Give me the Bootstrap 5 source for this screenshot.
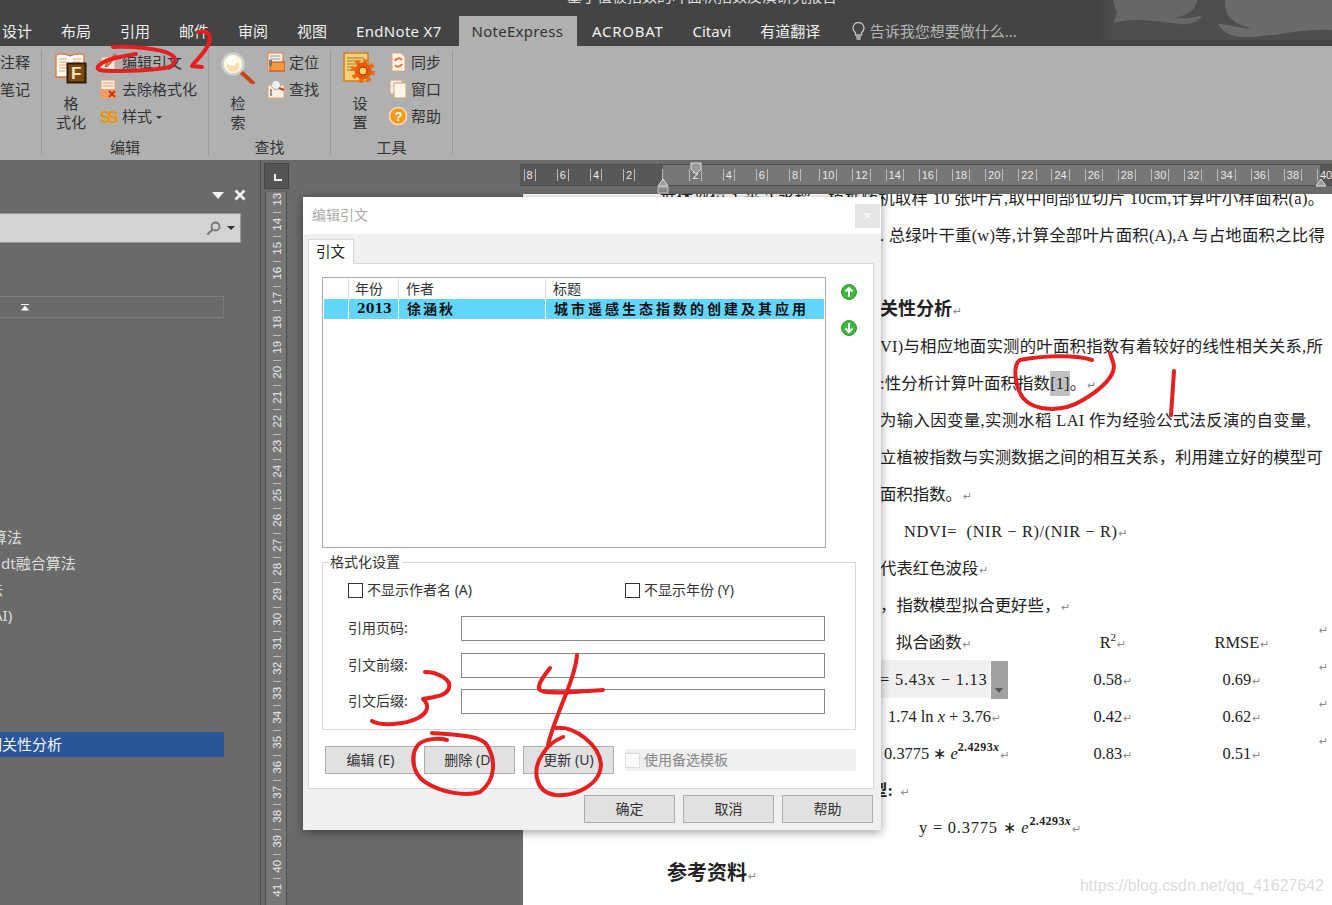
<!DOCTYPE html>
<html lang="zh-CN">
<head>
  <meta charset="UTF-8">
  <title>编辑引文</title>
  <link href="https://cdn.jsdelivr.net/npm/bootstrap@5.3.0/dist/css/bootstrap.min.css" rel="stylesheet">
  <style>
    html, body { width: 1332px; height: 905px; overflow: hidden; }
    body { position: relative; background: #6a6a6a; font: 15px/1.2 "Noto Sans", "Noto Sans CJK SC", sans-serif; color: #333; }
    .topbar { height: 46px; background: #444; position: relative; overflow: hidden; }
    .doc-title { position: absolute; left: 567px; top: -13px; font-size: 15px; color: #ddd; white-space: nowrap; }
    .leaf-art { position: absolute; left: 1100px; top: 0; }
    .rtabs { position: absolute; left: -12.5px; top: 16px; height: 30px; flex-wrap: nowrap; }
    .rtab { padding: 0 14.5px; line-height: 30px; color: #f0f0f0; white-space: nowrap; }
    .rtab.lat1 { letter-spacing: .3px; padding-right: 17px; }
    .rtab.on { background: #b0b0b0; color: #333; padding: 0 14px 0 13px; letter-spacing: .27px; }
    .rtab.lat2 { letter-spacing: .7px; padding-left: 15px; }
    .rtab.hint { color: #b5b5b5; padding-left: 16px; }
    .ribbon { height: 114px; background: #b0b0b0; }
    .rgroup { margin-top: 4px; height: 105px; border-right: 1px solid #999; padding-left: 8px; position: relative; }
    .g0 { width: 42px; padding-left: 0; }
    .g1 { width: 167px; }
    .g2, .g3 { width: 122px; }
    .rlabel { position: absolute; left: 0; right: 0; bottom: -1px; text-align: center; line-height: 18px; }
    .bigbtn { width: 42px; text-align: center; line-height: 19px; padding-top: 2px; margin-right: 8px; }
    .bigbtn svg { display: block; margin: 0 auto 10px; }
    .smallcol { margin-top: -1.5px; }
    .smallrow { height: 27px; gap: 4px; white-space: nowrap; }
    .smallrow svg { width: 18px; height: 20px; flex: none; }
    .caret-mini { display: inline-block; border: 3px solid transparent; border-top: 3px solid #333; border-bottom: 0; margin-left: 4px; vertical-align: middle; }
    .work { height: 745px; }
    .navpane { width: 261px; border-right: 1px solid #4e4e4e; position: relative; color: #ddd; }
    .pane-head { height: 53px; padding: 17px 14px 0 0; gap: 10px; }
    .tri-w { border: 6px solid transparent; border-top: 7px solid #f2f2f2; border-bottom: 0; }
    .search-fake { width: 241px; height: 30px; background: #d3d3d3; border: 1px solid #999; border-left: 0; padding-right: 5px; gap: 6px; }
    .tri-d { border: 4px solid transparent; border-top: 4px solid #333; border-bottom: 0; }
    .collapse-bar { width: 224px; height: 22px; margin-top: 53px; border: 1px solid #7c7c7c; border-left: 0; padding-left: 21px; }
    .headings { margin-top: 206px; width: 224px; font-size: 15px; }
    .headings .list-group-item { background: transparent; border: 0; border-radius: 0; color: #ddd; padding: 0; height: 26px; line-height: 26px; white-space: nowrap; overflow: hidden; }
    .headings .gap-item { height: 104px; }
    .headings .list-group-item.sel { background: #2b579a; color: #f4f4f4; height: 25px; line-height: 25px; text-indent: -13px; }
    .cut-a { text-indent: -8px; }
    .cut-b { text-indent: -12px; }
    .cut-c { text-indent: -7px; }
    .headings .list-group-item.hd-dt { padding-left: 1px; }
    .vrulercol { width: 27px; position: relative; }
    .lbox { width: 25px; height: 26px; margin: 3px 0 0 3px; background: #555; border: 1px solid #454545; position: relative; }
    .lmark { position: absolute; left: 9px; top: 10px; width: 8px; height: 7px; border-left: 2px solid #eee; border-bottom: 2px solid #eee; }
    .vruler { width: 22px; margin: 3px 0 0 4px; height: 713px; background: #777; border: solid #4e4e4e; border-width: 0 1px; overflow: hidden; }
    .vruler-in { margin-top: -5px; }
    .vtick { height: 24.7px; position: relative; color: #e8e8e8; font: 11.5px/20px "Liberation Sans", sans-serif; }
    .vtick span { display: block; text-align: center; transform: rotate(-90deg) translateY(1.5px); line-height: 24.7px; }
    .vtick::after { content: ""; position: absolute; left: 7px; top: 0; height: 1px; width: 8px; background: #bbb; }
    .deskarea { position: relative; overflow: hidden; }
    .hruler { height: 22px; margin: 4px 0 0 232px; width: 812px; overflow: hidden; background: linear-gradient(90deg, #585858 143px, #777 143px, #777 800px, #585858 800px); border-top: 1px solid #4e4e4e; border-bottom: 1px solid #4e4e4e; color: #e8e8e8; font: 11px/20px "Liberation Sans", sans-serif; }
    .htick { width: 33.2px; flex: none; text-align: center; position: relative; }
    .htick b { font-weight: 400; border-left: 1px solid #bbb; border-right: 1px solid #bbb; padding: 0 2px; }
    .htick.zero b { border-right: 0; padding: 0; }
    .hruler-in { margin-left: -7px; }
    .markers { position: absolute; left: 0; top: 0; }
    .pagesheet { position: absolute; left: 235px; top: 34px; right: 0; bottom: 0; background: #fff; overflow: hidden; color: #222; font: 16.4px/37px "Liberation Serif", "Noto Sans CJK SC", serif; white-space: nowrap; }
    .pagesheet-in { margin-top: -14.5px; }
    .dline { height: 37px; padding-left: 357px; }
    .dline.wide { padding-left: 137px; letter-spacing: .3px; }
    .sp-a { letter-spacing: .22px; }
    .sp-b { letter-spacing: .15px; }
    .sp-c { letter-spacing: .35px; }
    .ndvi { margin-left: 24px; letter-spacing: .6px; }
    .ret { color: #8c8c8c; font: 11px "DejaVu Sans", sans-serif; margin-left: 1px; letter-spacing: 0; }
    .hlref { background: #c0c0c0; padding: 3px 0; }
    .formula-box { background: #f0f0f0; width: 110px; height: 38px; line-height: 39px; margin-top: -.5px; letter-spacing: .8px; }
    .formula-drop { background: #a0a0a0; width: 17px; height: 38px; margin-left: 1px; position: relative; flex: none; }
    .formula-drop::after { content: ""; position: absolute; left: 4px; bottom: 6px; border: 4px solid transparent; border-top: 5px solid #555; border-bottom: 0; }
    .tc1 { width: 200px; flex: none; }
    .tc2 { width: 66px; text-align: center; flex: none; }
    .tc3 { width: 124px; margin-left: 34px; text-align: center; flex: none; }
    .tc4 { margin-left: 15px; }
    .dline sup { font-size: 11px; top: -.6em; }
    .dline sup.expo { font-size: 12px; font-weight: 700; letter-spacing: .4px; }
    .ital { font-style: italic; }
    .bheading { font-weight: 700; font-size: 18px; }
    .cut-line { margin-left: -9px; }
    .eq-line { margin-left: 39px; letter-spacing: .8px; }
    .refhead { font-weight: 700; font-size: 20px; margin-top: 9px; padding-left: 144px; }
    .wmark { position: absolute; left: 1080px; top: 877px; font: 15.9px "Liberation Sans", sans-serif; color: #dcdcdc; }
    .dlg { position: absolute; left: 303px; top: 197px; width: 578px; height: 633px; background: #f0f0f0; box-shadow: 0 2px 9px rgba(0,0,0,.4); font-size: 14px; color: #333; }
    .dlg-title { height: 37px; background: #fff; padding: 0 1px 0 9px; color: #aaa; }
    .dlg-x { width: 25px; height: 24px; padding: 0; border: 0; border-radius: 0; background: #e5e5e5; color: #fff; font-size: 14px; line-height: 22px; }
    .dlg-body { padding: 5px 7px 0 5px; }
    .dlg-tabs { border-bottom: 0; height: 24px; }
    .dlg-tab { width: 46px; height: 25px; line-height: 23px; padding-left: 7px; background: #fff; border: 1px solid #d9d9d9; border-bottom: 0; position: relative; z-index: 1; font-size: 14.5px; color: #222; }
    .dlg-panel { height: 526px; background: #fff; border: 1px solid #d9d9d9; padding: 13px 13px 0; }
    .reflist { width: 504px; height: 271px; border: 1px solid #aaa; padding: 1px; flex: none; }
    .rl-row { height: 20px; line-height: 20px; }
    .rl-c0 { width: 24px; flex: none; }
    .rl-c1 { width: 50px; flex: none; border-left: 1px solid #ddd; padding-left: 6px; }
    .rl-c2 { width: 147px; flex: none; border-left: 1px solid #ddd; padding-left: 7px; }
    .rl-c3 { flex: 1; border-left: 1px solid #ddd; padding-left: 7px; }
    .rl-row.picked { background: #62d6ff; font-weight: 700; color: #111; font-size: 14px; letter-spacing: 2px; }
    .rl-row.picked > div { border-left: 1px solid #fff; }
    .rl-row.picked .rl-c0 { border-left: 0; }
    .rl-row.picked .rl-c1 { font-family: "DejaVu Serif", serif; font-size: 12.5px; letter-spacing: 0; padding-left: 8px; }
    .rl-row.picked .rl-c2 { letter-spacing: 2px; padding-left: 8px; }
    .rl-row.picked .rl-c3 { letter-spacing: 3px; padding-left: 8px; }
    .updown { margin-left: 15px; padding-top: 7px; gap: 20px; }
    .fmtset { width: 534px; height: 175px; margin: 7px 0 0; border: 1px solid #d9d9d9; padding: 13px 25px 0; min-inline-size: 0; }
    .fmtset legend { float: none; width: auto; font-size: 14px; line-height: 14px; margin: 0 0 0 -19px; padding: 0 2px 0 1px; color: #333; }
    .chk-row { height: 16px; }
    .chk-col { width: 277px; gap: 4px; }
    .chk-box { width: 15px; height: 15px; margin: 0; border: 1px solid #333; border-radius: 0 !important; flex: none; }
    .field-row { height: 25px; margin-top: 11.5px; }
    .chk-row + .field-row { margin-top: 18px; }
    .field-lb { width: 113px; flex: none; }
    .field-in { width: 364px; height: 25px; border: 1px solid #888; border-radius: 0; padding: 0 4px; }
    .act-row { margin: 16px 0 0 3px; gap: 8px; }
    .dlg-btn { width: 91px; height: 28px; padding: 0; background: #e1e1e1; border: 1px solid #adadad; border-radius: 0; font-size: 14px; line-height: 26px; color: #333; }
    .tpl-chk { width: 231px; height: 22px; margin-left: 3px; background: #efefef; color: #888; gap: 4px; }
    .tpl-chk .chk-box { border-color: #ddd; background: #fbfbfb; opacity: 1; }
    .foot-row { margin: 6px 1px 0 0; gap: 8px; }
    .scribble { position: absolute; left: 0; top: 0; pointer-events: none; }
    .scribble path { fill: none; stroke: #e61f1f; stroke-width: 4; stroke-linecap: round; stroke-linejoin: round; }
  </style>
</head>
<body>
  <div class="topbar">
    <div class="doc-title">基于植被指数的叶面积指数反演研究报告</div>
    <svg class="leaf-art" width="232" height="40" viewBox="1100 0 232 40">
      <defs><linearGradient id="fadeIn"><stop offset="0" stop-color="#444"/><stop offset=".06" stop-color="#4e4e4e"/></linearGradient></defs>
      <rect x="1100" y="0" width="232" height="40" fill="url(#fadeIn)"/>
      <path d="M1113 0L1117 13L1113 23C1130 18 1150 20 1170 23C1185 26 1198 24 1202 15C1195 18 1180 19 1174 18C1190 15 1197 8 1197 0Z" fill="#676767"/>
      <path d="M1225 0C1224 15 1232 24 1252 28C1240 29 1228 24 1218 24C1225 34 1232 37 1245 37C1275 37 1300 28 1332 30V0Z" fill="#6b6b6b"/>
    </svg>
    <div class="nav rtabs">
      <div class="rtab">设计</div>
      <div class="rtab">布局</div>
      <div class="rtab">引用</div>
      <div class="rtab">邮件</div>
      <div class="rtab">审阅</div>
      <div class="rtab">视图</div>
      <div class="rtab lat1">EndNote X7</div>
      <div class="rtab on">NoteExpress</div>
      <div class="rtab lat2">ACROBAT</div>
      <div class="rtab">Citavi</div>
      <div class="rtab">有道翻译</div>
      <div class="rtab hint d-flex align-items-center gap-1">
        <svg width="15" height="18" viewBox="0 0 15 18"><path d="M4.500 11C2.500 9 2 7.500 2 6a5.500 5.500 0 0 1 11 0c0 1.500-.5 3-2.500 5v2h-6z" fill="none" stroke="#c4c4c4" stroke-width="1.300"/><path d="M5 15h5M5.500 17h4" stroke="#c4c4c4" stroke-width="1.300"/></svg>
        <span>告诉我您想要做什么...</span>
      </div>
    </div>
  </div>

  <div class="ribbon d-flex">
    <div class="rgroup g0">
      <div class="smallcol">
        <div class="smallrow d-flex align-items-center">注释</div>
        <div class="smallrow d-flex align-items-center">笔记</div>
      </div>
    </div>
    <div class="rgroup g1 d-flex">
      <div class="bigbtn">
        <svg width="32" height="32" viewBox="0 0 32 32">
          <path d="M1 3C6 1 11 2 15 4C19 2 24 1 29 3V25H16L15 26L14 25H1Z" fill="#fff" stroke="#e8702a" stroke-width="1.300"/>
          <path d="M4 7h8M4 10h8M4 13h8M4 16h8M4 19h6M18 7h8M18 10h8" stroke="#ea9a66"/>
          <rect x="12.500" y="11.500" width="18" height="19" fill="#7a4a12" stroke="#2f1b04" stroke-width="2"/>
          <text x="16" y="27" font-family="Liberation Sans" font-weight="700" font-size="17" fill="#f8e2b8">F</text>
        </svg>
        <div>格</div><div>式化</div>
      </div>
      <div class="smallcol">
        <div class="smallrow d-flex align-items-center">
          <svg viewBox="0 0 18 20"><rect x="1" y="5" width="14" height="13" fill="#f6e8dc" stroke="#e0a080"/><path d="M6 12L15 2l2 2-9 10-3 1z" fill="#e8843c" stroke="#a33" stroke-width=".8"/></svg>
          <span>编辑引文</span>
        </div>
        <div class="smallrow d-flex align-items-center">
          <svg viewBox="0 0 18 20"><path d="M1 1h14v18H1z" fill="#fbeee2" stroke="#e8a070"/><path d="M3 4h10M3 7h10" stroke="#e8b898" stroke-width="1.500"/><rect x="1" y="10" width="15" height="9" fill="#f0a060"/><path d="M9 12l6 6M15 12l-6 6" stroke="#c8321c" stroke-width="2"/></svg>
          <span>去除格式化</span>
        </div>
        <div class="smallrow d-flex align-items-center">
          <svg viewBox="0 0 18 20"><text x="0" y="17" font-family="Liberation Sans" font-weight="700" font-size="16" letter-spacing="-3" fill="#f09400">SS</text></svg>
          <span>样式<i class="caret-mini"></i></span>
        </div>
      </div>
      <div class="rlabel">编辑</div>
    </div>
    <div class="rgroup g2 d-flex">
      <div class="bigbtn">
        <svg width="34" height="32" viewBox="0 0 34 32">
          <path d="M19 19L32 31" stroke="#c8431c" stroke-width="4" stroke-linecap="round"/>
          <circle cx="12" cy="12" r="10.500" fill="#fff6df" stroke="#cfcfcf" stroke-width="2.500"/>
          <circle cx="12" cy="14" r="6" fill="#f5dca8"/>
          <circle cx="11" cy="9" r="5" fill="#fffdf6"/>
        </svg>
        <div>检</div><div>索</div>
      </div>
      <div class="smallcol">
        <div class="smallrow d-flex align-items-center">
          <svg viewBox="0 0 18 20"><rect x="1" y="1" width="15" height="18" fill="#fbeee2" stroke="#e8843c"/><rect x="3" y="10" width="15" height="9" fill="#f29a3c" stroke="#c8431c"/><path d="M3 4h10M3 7h10" stroke="#8899aa"/><rect x="2" y="8" width="3" height="6" fill="#777"/></svg>
          <span>定位</span>
        </div>
        <div class="smallrow d-flex align-items-center">
          <svg viewBox="0 0 18 20"><rect x="1" y="6" width="16" height="13" fill="#fbeee2" stroke="#e8a070"/><circle cx="9" cy="6" r="4.500" fill="#eee" stroke="#aaa"/><path d="M12 9l5 2" stroke="#c8431c" stroke-width="2"/><path d="M4 11v5M3 11h2M3 16h2" stroke="#555"/></svg>
          <span>查找</span>
        </div>
      </div>
      <div class="rlabel">查找</div>
    </div>
    <div class="rgroup g3 d-flex">
      <div class="bigbtn">
        <svg width="34" height="32" viewBox="0 0 34 32">
          <path d="M1 1H25V29H1Z" fill="#f4d078" stroke="#d08020" stroke-width="1.500"/>
          <path d="M4 6h17M4 9h14M4 12h10M4 15h8M4 18h7" stroke="#a87b2c"/>
          <circle cx="20" cy="19" r="10" fill="none" stroke="#ee6a0c" stroke-width="4" stroke-dasharray="4 3.850"/>
          <circle cx="20" cy="19" r="8.500" fill="#e85a0c"/>
          <circle cx="20" cy="19" r="4" fill="#ffd36a" stroke="#a83a08"/>
        </svg>
        <div>设</div><div>置</div>
      </div>
      <div class="smallcol">
        <div class="smallrow d-flex align-items-center">
          <svg viewBox="0 0 18 20"><path d="M3 1h9l4 4v14H3z" fill="#fdf3ea" stroke="#e8a070"/><path d="M6 9a4 4 0 0 1 7-1M13 12a4 4 0 0 1-7 1" fill="none" stroke="#e8702a" stroke-width="2"/></svg>
          <span>同步</span>
        </div>
        <div class="smallrow d-flex align-items-center">
          <svg viewBox="0 0 18 20"><rect x="1" y="1" width="12" height="14" fill="#eee" stroke="#d9a070"/><rect x="5" y="4" width="12" height="15" fill="#fff6ea" stroke="#d9a070"/></svg>
          <span>窗口</span>
        </div>
        <div class="smallrow d-flex align-items-center">
          <svg viewBox="0 0 18 20"><circle cx="9" cy="10" r="8.500" fill="#f29a1c" stroke="#ffe0a8" stroke-width="1.500"/><text x="5.500" y="15" font-family="Liberation Sans" font-weight="700" font-size="13" fill="#fff">?</text></svg>
          <span>帮助</span>
        </div>
      </div>
      <div class="rlabel">工具</div>
    </div>
  </div>

  <div class="work d-flex">
    <div class="navpane">
      <div class="pane-head d-flex justify-content-end align-items-center">
        <i class="tri-w"></i>
        <svg width="12" height="12" viewBox="0 0 12 12"><path d="M1.500 1.500l9 9M10.500 1.500l-9 9" stroke="#f2f2f2" stroke-width="2.500"/></svg>
      </div>
      <div class="search-fake d-flex justify-content-end align-items-center">
        <svg width="15" height="15" viewBox="0 0 15 15"><circle cx="9.500" cy="5.500" r="4" fill="none" stroke="#777" stroke-width="1.800"/><path d="M6.500 8.500L1.500 13.500" stroke="#777" stroke-width="2.200"/></svg>
        <i class="tri-d"></i>
      </div>
      <div class="collapse-bar d-flex align-items-center">
        <svg width="8" height="7" viewBox="0 0 8 7"><path d="M0 .5h8" stroke="#fff"/><path d="M4 1.500L8 6.500H0z" fill="#fff"/></svg>
      </div>
      <div class="list-group headings">
        <div class="list-group-item cut-a">算法</div>
        <div class="list-group-item hd-dt">dt融合算法</div>
        <div class="list-group-item cut-b">法</div>
        <div class="list-group-item cut-c">AI)</div>
        <div class="list-group-item gap-item"></div>
        <div class="list-group-item sel">相关性分析</div>
      </div>
    </div>
    <div class="vrulercol">
      <div class="lbox"><i class="lmark"></i></div>
      <div class="vruler"><div class="vruler-in" id="vticks"></div></div>
    </div>
    <div class="deskarea flex-grow-1">
      <div class="hruler"><div class="d-flex hruler-in" id="hticks"></div></div>
      <svg class="markers" width="1044" height="34" viewBox="0 0 1044 34">
        <path d="M403 3h10v6l-5 5-5-5z" fill="#9a9a9a" stroke="#e0e0e0"/>
        <path d="M370 26l5-7 5 7z" fill="#9a9a9a" stroke="#e0e0e0"/>
        <rect x="370" y="27" width="10" height="6" fill="#8a8a8a" stroke="#c8c8c8"/>
        <path d="M1028 26l5-7 5 7z" fill="#9a9a9a" stroke="#e0e0e0"/>
      </svg>
      <div class="pagesheet">
        <div class="pagesheet-in">
          <div class="dline wide">群体部位 1 米 2 水稻，植株随机取样 10 张叶片,取中间部位切片 10cm,计算叶小样面积(a)。</div>
          <div class="dline sp-a">. 总绿叶干重(w)等,计算全部叶片面积(A),A 与占地面积之比得</div>
          <div class="dline"></div>
          <div class="dline bheading">关性分析<span class="ret">↵</span></div>
          <div class="dline sp-a">VI)与相应地面实测的叶面积指数有着较好的线性相关关系,所</div>
          <div class="dline sp-b">:性分析计算叶面积指数<span class="hlref">[1]</span>。<span class="ret">↵</span></div>
          <div class="dline sp-c">为输入因变量,实测水稻 LAI 作为经验公式法反演的自变量,</div>
          <div class="dline">立植被指数与实测数据之间的相互关系，利用建立好的模型可</div>
          <div class="dline">面积指数。<span class="ret">↵</span></div>
          <div class="dline"><span class="d-inline-block ndvi">NDVI= &nbsp;(NIR − R)/(NIR − R)</span><span class="ret">↵</span></div>
          <div class="dline">代表红色波段<span class="ret">↵</span></div>
          <div class="dline">，指数模型拟合更好些，<span class="ret">↵</span></div>
          <div class="dline d-flex">
            <div class="tc1 ps-3">拟合函数<span class="ret">↵</span></div>
            <div class="tc2">R<sup>2</sup><span class="ret">↵</span></div>
            <div class="tc3">RMSE<span class="ret">↵</span></div>
            <div class="tc4 ret">↵</div>
          </div>
          <div class="dline d-flex">
            <div class="tc1 d-flex">
              <div class="formula-box">= 5.43x − 1.13</div>
              <div class="formula-drop"></div>
            </div>
            <div class="tc2">0.58<span class="ret">↵</span></div>
            <div class="tc3">0.69<span class="ret">↵</span></div>
            <div class="tc4 ret">↵</div>
          </div>
          <div class="dline d-flex">
            <div class="tc1 ps-2">1.74 ln <span class="ital">x</span> + 3.76<span class="ret">↵</span></div>
            <div class="tc2">0.42<span class="ret">↵</span></div>
            <div class="tc3">0.62<span class="ret">↵</span></div>
            <div class="tc4 ret">↵</div>
          </div>
          <div class="dline d-flex">
            <div class="tc1">&nbsp;0.3775 ∗ <span class="ital">e</span><sup class="expo">2.4293<span class="ital">x</span></sup><span class="ret">↵</span></div>
            <div class="tc2">0.83<span class="ret">↵</span></div>
            <div class="tc3">0.51<span class="ret">↵</span></div>
            <div class="tc4 ret">↵</div>
          </div>
          <div class="dline"><b class="d-inline-block cut-line">型:</b><span class="ret ms-2">↵</span></div>
          <div class="dline"><span class="d-inline-block eq-line">y = 0.3775 ∗ <span class="ital">e</span><sup class="expo">2.4293<span class="ital">x</span></sup></span><span class="ret">↵</span></div>
          <div class="refhead">参考资料<span class="ret">↵</span></div>
        </div>
      </div>
    </div>
  </div>

  <div class="wmark">https://blog.csdn.net/qq_41627642</div>

  <div class="dlg">
    <div class="dlg-title d-flex justify-content-between align-items-center">
      <span>编辑引文</span>
      <button type="button" class="btn dlg-x">×</button>
    </div>
    <div class="dlg-body">
      <div class="nav dlg-tabs"><div class="dlg-tab">引文</div></div>
      <div class="dlg-panel">
        <div class="d-flex">
          <div class="reflist">
            <div class="rl-row d-flex">
              <div class="rl-c0"></div><div class="rl-c1">年份</div><div class="rl-c2">作者</div><div class="rl-c3">标题</div>
            </div>
            <div class="rl-row picked d-flex">
              <div class="rl-c0"></div><div class="rl-c1">2013</div><div class="rl-c2">徐涵秋</div><div class="rl-c3">城市遥感生态指数的创建及其应用</div>
            </div>
          </div>
          <div class="updown d-flex flex-column">
            <svg width="16" height="16" viewBox="0 0 16 16"><circle cx="8" cy="8" r="7.500" fill="#3cb93c" stroke="#2a9a2a"/><path d="M8 13V4M4.500 7.500L8 4l3.500 3.500" fill="none" stroke="#fff" stroke-width="2"/></svg>
            <svg width="16" height="16" viewBox="0 0 16 16"><circle cx="8" cy="8" r="7.500" fill="#3cb93c" stroke="#2a9a2a"/><path d="M8 3v9M4.500 8.500L8 12l3.500-3.500" fill="none" stroke="#fff" stroke-width="2"/></svg>
          </div>
        </div>
        <fieldset class="fmtset">
          <legend>格式化设置</legend>
          <div class="chk-row d-flex align-items-center">
            <label class="chk-col d-flex align-items-center"><input type="checkbox" class="form-check-input chk-box"><span>不显示作者名 (A)</span></label>
            <label class="d-flex align-items-center gap-1"><input type="checkbox" class="form-check-input chk-box"><span>不显示年份 (Y)</span></label>
          </div>
          <div class="field-row d-flex align-items-center"><label class="field-lb">引用页码:</label><input type="text" class="form-control field-in"></div>
          <div class="field-row d-flex align-items-center"><label class="field-lb">引文前缀:</label><input type="text" class="form-control field-in"></div>
          <div class="field-row d-flex align-items-center"><label class="field-lb">引文后缀:</label><input type="text" class="form-control field-in"></div>
        </fieldset>
        <div class="act-row d-flex align-items-center">
          <button type="button" class="btn dlg-btn">编辑 (E)</button>
          <button type="button" class="btn dlg-btn">删除 (D)</button>
          <button type="button" class="btn dlg-btn">更新 (U)</button>
          <label class="tpl-chk d-flex align-items-center"><input type="checkbox" class="form-check-input chk-box" disabled><span>使用备选模板</span></label>
        </div>
      </div>
      <div class="foot-row d-flex justify-content-end">
        <button type="button" class="btn dlg-btn">确定</button>
        <button type="button" class="btn dlg-btn">取消</button>
        <button type="button" class="btn dlg-btn">帮助</button>
      </div>
    </div>
  </div>

  <!-- 手写红色标注 -->
  <svg class="scribble" width="1332" height="905" viewBox="0 0 1332 905">
    <path d="M113 47C135 46 160 49 170 54C178 58 176 66 165 68C145 71 110 72 100 70C94 68 100 62 115 58L136 54"/>
    <path d="M198 32C206 30 212 33 209 43C206 52 196 60 192 66L202 67"/>
    <path d="M1174 371L1171 415"/>
    <path d="M1092 360C1075 354 1040 356 1020 360C1013 364 1014 385 1023 398C1033 410 1060 414 1083 400C1100 390 1118 375 1113 362L1110 353"/>
    <path d="M425 672C438 672 452 680 449 688C446 697 432 697 423 699C430 705 428 713 418 718C405 725 380 726 372 721"/>
    <path d="M577 655C575 680 555 715 548 745"/>
    <path d="M550 668C545 675 538 682 539 689C542 695 575 692 603 690"/>
    <path d="M556 728C575 726 600 745 601 765C600 785 575 797 555 795C535 792 532 770 542 755C548 745 555 740 563 737"/>
    <path d="M432 733C455 735 480 735 487 745C496 760 496 780 480 792C465 797 440 792 425 782C412 773 410 755 418 745C425 738 440 738 447 740"/>
  </svg>

  <script>
    // 标尺刻度
    var h = '';
    for (var n = -8; n <= 40; n += 2) {
      h += n === 0 ? '<div class="htick zero"><b></b></div>' : '<div class="htick"><b>' + Math.abs(n) + '</b></div>';
    }
    document.getElementById('hticks').innerHTML = h;
    var v = '';
    for (var i = 13; i <= 41; i++) {
      v += '<div class="vtick"><span>' + i + '</span></div>';
    }
    document.getElementById('vticks').innerHTML = v;
  </script>
  <script src="https://cdn.jsdelivr.net/npm/bootstrap@5.3.0/dist/js/bootstrap.bundle.min.js"></script>
</body>
</html>
